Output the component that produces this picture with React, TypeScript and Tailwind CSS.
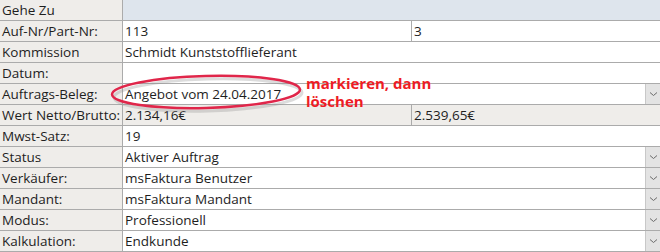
import React from "react"

type Row = {
  label: string
  value?: string
  second?: string
  combo?: boolean
  shaded?: boolean
}

const rows: Row[] = [
  { label: "Auf-Nr/Part-Nr:", value: "113", second: "3" },
  { label: "Kommission", value: "Schmidt Kunststofflieferant" },
  { label: "Datum:", value: "" },
  { label: "Auftrags-Beleg:", value: "Angebot vom 24.04.2017", combo: true },
  { label: "Wert Netto/Brutto:", value: "2.134,16€", second: "2.539,65€", shaded: true },
  { label: "Mwst-Satz:", value: "19" },
  { label: "Status", value: "Aktiver Auftrag", combo: true },
  { label: "Verkäufer:", value: "msFaktura Benutzer", combo: true },
  { label: "Mandant:", value: "msFaktura Mandant", combo: true },
  { label: "Modus:", value: "Professionell", combo: true },
  { label: "Kalkulation:", value: "Endkunde", combo: true },
]

function ComboButton() {
  return (
    <div className="w-[15px] h-full shrink-0 bg-[#e3e3e3] border-l border-[#c8c8c8] flex items-center justify-center">
      <svg width="9" height="6" viewBox="0 0 9 6">
        <path d="M1 1.5 L4.5 4.5 L8 1.5" fill="none" stroke="#6b6b6b" strokeWidth="1" />
      </svg>
    </div>
  )
}

export default function App() {
  return (
    <div
      className="relative w-[660px] h-[252px] bg-white text-[13.5px] text-[#1e1e1e] overflow-hidden"
      style={{ fontFamily: '"Open Sans", "Noto Sans", sans-serif' }}
    >
      <div className="flex h-[21px] border-b border-[#ababab]">
        <div className="w-[123px] shrink-0 bg-[#efedea] border-r border-[#ababab] pl-[2px] leading-[20px]">Gehe Zu</div>
        <div className="flex-1 bg-[#dee5ed]" />
      </div>

      {rows.map((r) => (
        <div key={r.label} className="flex h-[21px] border-b border-[#ababab]">
          <div className="w-[123px] shrink-0 bg-[#efedea] border-r border-[#ababab] pl-[2px] leading-[20px] whitespace-nowrap">
            {r.label}
          </div>
          <div className={`flex flex-1 min-w-0 ${r.shaded ? "bg-[#efedea]" : "bg-white"}`}>
            {r.second !== undefined ? (
              <>
                <div className="w-[289px] shrink-0 border-r border-[#ababab] pl-[2px] leading-[20px]">{r.value}</div>
                <div className="flex-1 pl-[2px] leading-[20px]">{r.second}</div>
              </>
            ) : (
              <div className="flex-1 pl-[2px] leading-[20px] whitespace-nowrap">{r.value}</div>
            )}
            {r.combo && <ComboButton />}
          </div>
        </div>
      ))}

      <svg className="absolute left-0 top-0 pointer-events-none" width="660" height="252">
        <ellipse cx="207" cy="93" rx="94" ry="16" fill="none" stroke="#8a8a8a" strokeOpacity="0.3" strokeWidth="3" transform="translate(1 2) rotate(-1.5 207 93)" />
        <ellipse cx="206" cy="92" rx="94" ry="16" fill="none" stroke="#e0264a" strokeWidth="2.5" transform="rotate(-1.5 206 92)" />
      </svg>

      <div className="absolute left-[306px] top-[74px] text-[#ee1c25] font-bold text-[15px] leading-[18px]">
        markieren, dann
        <br />
        löschen
      </div>
    </div>
  )
}
